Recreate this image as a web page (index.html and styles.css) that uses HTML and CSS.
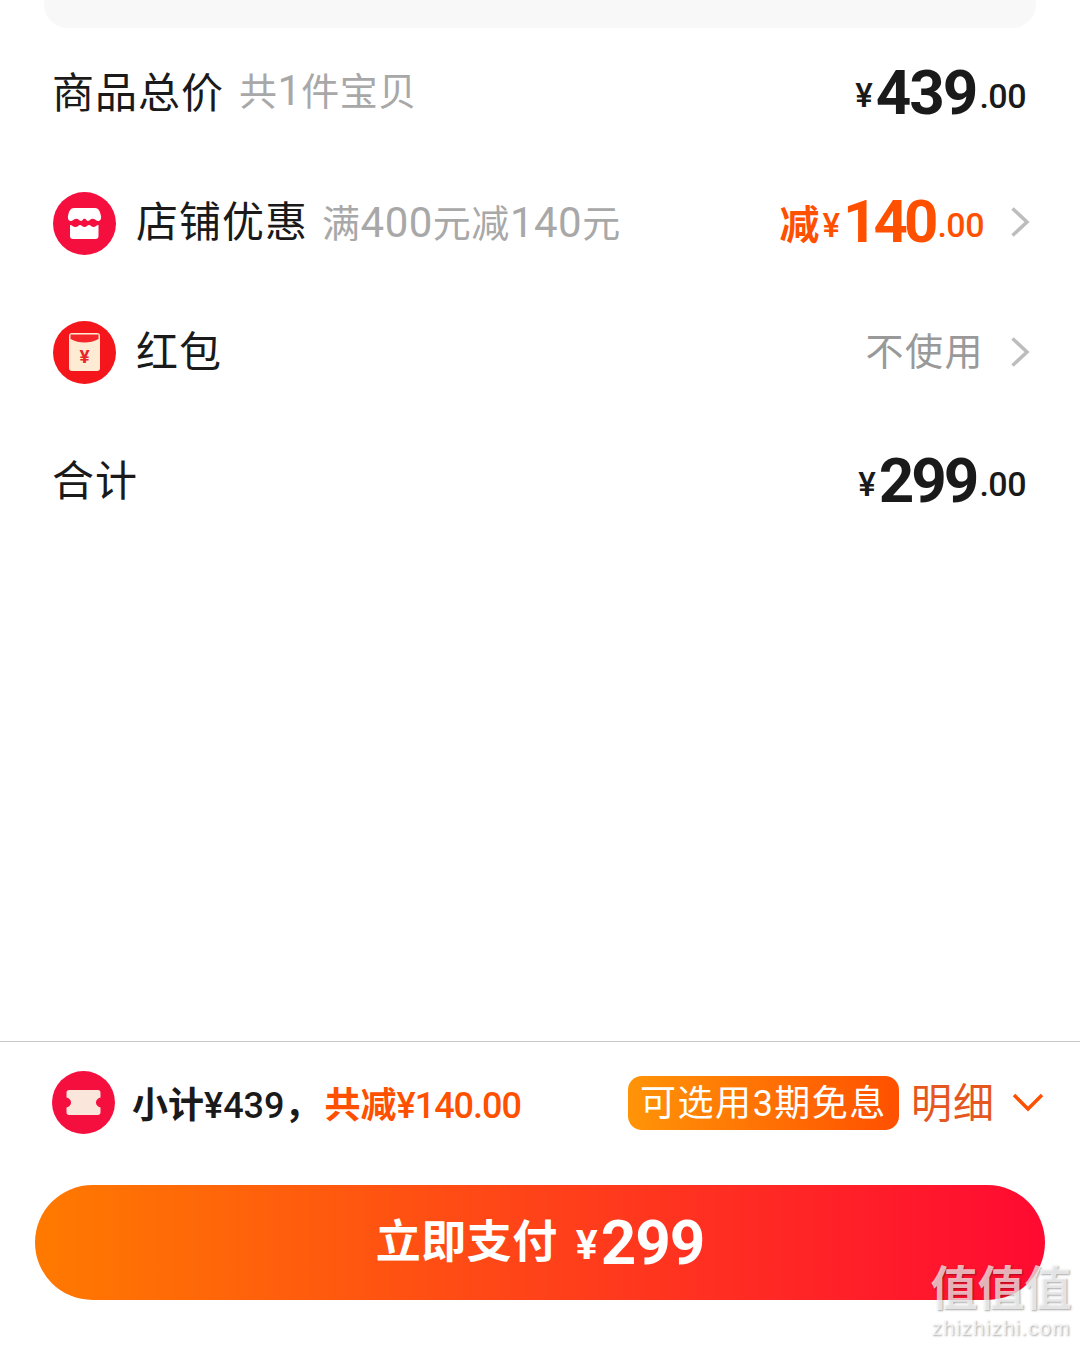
FILE: index.html
```html
<!DOCTYPE html>
<html lang="en">
<head>
    <meta charset="UTF-8">
    <meta name="viewport" content="width=device-width, initial-scale=1.0">
    <title>确认订单</title>
    <link rel="stylesheet" href="styles.css">
</head>
<body>
    <div class="page">
        <div class="top-card"></div>

        <div class="rows">
            <div class="row">
                <div class="row-left">
                    <span class="label">商品总价</span>
                    <span class="sub">共<span class="digits tight">1</span>件宝贝</span>
                </div>
                <div class="price">
                    <span class="yen">¥</span><span class="big">439</span><span class="dec">.00</span>
                </div>
            </div>

            <div class="row">
                <div class="row-left">
                    <svg class="round-icon" viewBox="0 0 63 63">
                        <circle cx="31.5" cy="31.5" r="31.5" fill="#f50f3f"/>
                        <path d="M21 16h21c3.500 0 5 3 6 8 .6 3-1 5-3 5-2.400 0-3-2.200-5.300-2.200S37 29 35 29s-1.500-2.200-3.500-2.200S30 29 28 29s-2.400-2.200-4.700-2.200S20.400 29 18 29c-2 0-3.600-2-3-5 1-5 2.500-8 6-8z" fill="#fff"/>
                        <path d="M17 33c2 0 3 2 5.500 2s3-2 4.500-2 2.500 2 4.500 2 3-2 4.500-2 2.500 2 4.500 2 3-2 5-2V44c0 2-1 3-3 3H20c-2 0-3-1-3-3z" fill="#fff"/>
                    </svg>
                    <span class="label">店铺优惠</span>
                    <span class="sub deal">满<span class="digits">400</span>元减<span class="digits">140</span>元</span>
                </div>
                <div class="row-right">
                    <div class="price orange">
                        <span class="cut">减</span><span class="yen">¥</span><span class="big narrow">140</span><span class="dec">.00</span>
                    </div>
                    <svg class="chevron" viewBox="0 0 20 32"><path d="M2.500 2.500 17 16 2.500 29.500" fill="none" stroke="#bdbdbd" stroke-width="3.500"/></svg>
                </div>
            </div>

            <div class="row">
                <div class="row-left">
                    <svg class="round-icon" viewBox="0 0 63 63">
                        <circle cx="31.5" cy="31.5" r="31.5" fill="#f5161c"/>
                        <rect x="16" y="12" width="31" height="38" rx="3" fill="#fdebd3"/>
                        <path d="M17.500 13.500h28V18c-4 2.500-9.500 3.500-14 3.500S21.500 20.500 17.500 18z" fill="#f5262a"/>
                        <text class="env-yen" x="31.500" y="42" text-anchor="middle">¥</text>
                    </svg>
                    <span class="label">红包</span>
                </div>
                <div class="row-right">
                    <span class="unused">不使用</span>
                    <svg class="chevron" viewBox="0 0 20 32"><path d="M2.500 2.500 17 16 2.500 29.500" fill="none" stroke="#bdbdbd" stroke-width="3.500"/></svg>
                </div>
            </div>

            <div class="row">
                <div class="row-left">
                    <span class="label">合计</span>
                </div>
                <div class="price">
                    <span class="yen">¥</span><span class="big mid">299</span><span class="dec">.00</span>
                </div>
            </div>
        </div>

        <div class="footer">
            <div class="summary">
                <div class="summary-left">
                    <svg class="round-icon" viewBox="0 0 63 63">
                        <circle cx="31.5" cy="31.5" r="31.5" fill="#f50f3f"/>
                        <path d="M17 19h29c1.500 0 2.500 1 2.500 2.500v5c-3 1-4.500 2.500-4.500 5s1.500 4 4.500 5v5c0 1.500-1 2.500-2.500 2.500H17c-1.500 0-2.500-1-2.500-2.500v-5c3-1 4.500-2.500 4.500-5s-1.500-4-4.500-5v-5c0-1.500 1-2.500 2.500-2.500z" fill="#fbe6dc"/>
                    </svg>
                    <span class="subtotal">小计<span class="sum-num">¥439</span>，</span>
                    <span class="saved">共减<span class="sum-num">¥140.00</span></span>
                </div>
                <div class="summary-right">
                    <span class="badge"><span class="badge-text">可选用<span class="badge-num">3</span>期免息</span></span>
                    <span class="detail">明细</span>
                    <svg class="caret" viewBox="0 0 32 20"><path d="M2 2 16 16 30 2" fill="none" stroke="#ff5000" stroke-width="3.500"/></svg>
                </div>
            </div>
            <button class="pay" type="button">
                <span class="pay-label">立即支付</span><span class="pay-yen">¥</span><span class="pay-num">299</span>
            </button>
        </div>

        <div class="watermark">
            <div class="wm-chars">值值值</div>
            <div class="wm-site">zhizhizhi.com</div>
        </div>
    </div>
</body>
</html>
```

FILE: styles.css
```css
* {
    margin: 0;
    padding: 0;
    box-sizing: border-box;
}

body {
    background: #fff;
    font-family: "Noto Sans CJK SC", "Noto Sans", sans-serif;
    color: #1a1a1a;
}

.page {
    position: relative;
    width: 1080px;
    height: 1345px;
    display: flex;
    flex-direction: column;
    overflow: hidden;
}

.top-card {
    height: 28px;
    margin: 0 44px;
    background: #f8f8f8;
    border-radius: 0 0 24px 24px;
}

.rows {
    flex: 1;
    padding: 0 54px 0 52px;
}

.row {
    height: 129.5px;
    display: flex;
    align-items: center;
    justify-content: space-between;
}

.row-left,
.row-right {
    display: flex;
    align-items: center;
}

.label {
    font-size: 42px;
    line-height: 50px;
    letter-spacing: 1px;
    margin-bottom: 6px;
}

.round-icon {
    width: 63px;
    height: 63px;
    flex: none;
    margin: 2px 20px 0 1px;
}

.sub {
    margin-left: 15px;
    margin-bottom: 6px;
    font-size: 38px;
    line-height: 50px;
    letter-spacing: 0.500px;
    color: #a8a8a8;
}

.sub.deal {
    margin-left: 14px;
    margin-bottom: 0;
}

.digits {
    font-family: "Roboto", sans-serif;
    font-size: 42px;
    letter-spacing: 0.500px;
}

.digits.tight {
    letter-spacing: 0;
}

.price {
    display: flex;
    align-items: center;
    font-family: "Roboto", sans-serif;
    font-weight: 700;
    color: #1a1a1a;
}

.price.orange {
    color: #ff5000;
}

.yen {
    font-size: 33px;
    font-weight: 500;
    margin: 6px 3px 0 0;
}

.big {
    font-size: 62px;
    letter-spacing: -2px;
    line-height: 70px;
}

.big.mid {
    letter-spacing: -3px;
}

.big.narrow {
    font-size: 60px;
    letter-spacing: -4px;
}

.dec {
    font-size: 34px;
    font-weight: 500;
    letter-spacing: -0.500px;
    margin: 6px 0 0 3px;
}

.cut {
    font-family: "Noto Sans CJK SC", sans-serif;
    font-size: 40px;
    font-weight: 700;
    line-height: 40px;
    margin: 0 3px 0 0;
}

.unused {
    font-size: 38px;
    margin-bottom: 6px;
    color: #999;
    letter-spacing: 1.500px;
}

.chevron {
    width: 20px;
    height: 32px;
    margin: 0 -4px 0 26px;
}

.env-yen {
    font-family: "Roboto", sans-serif;
    font-size: 19px;
    font-weight: 700;
    fill: #e8262a;
}

.footer {
    height: 304px;
    border-top: 1px solid #c9c9c9;
    padding: 0 35px;
}

.summary {
    height: 121px;
    padding: 0 1px 0 17px;
    display: flex;
    align-items: center;
    justify-content: space-between;
}

.summary-left,
.summary-right {
    display: flex;
    align-items: center;
}

.summary-left .round-icon {
    margin: 0 17px 0 0;
}

.subtotal,
.saved {
    font-size: 36px;
    font-weight: 700;
    line-height: 50px;
    margin-top: 2px;
}

.saved {
    color: #ff5000;
    margin-left: 4px;
}

.sum-num {
    font-family: "Roboto", sans-serif;
    font-size: 36px;
    font-weight: 500;
    letter-spacing: -1px;
}

.subtotal .sum-num {
    letter-spacing: 0;
}

.badge {
    height: 54px;
    width: 271px;
    display: flex;
    align-items: center;
    justify-content: center;
    border-radius: 14px;
    background: linear-gradient(90deg, #ff9408, #ff5000);
    color: #fff;
    font-size: 36px;
}

.badge-text {
    letter-spacing: 1.500px;
    margin-bottom: 6px;
}

.badge-num {
    font-family: "Roboto", sans-serif;
}

.detail {
    margin: 0 0 6px 12px;
    font-size: 41px;
    line-height: 50px;
    letter-spacing: 1px;
    color: #e4571f;
}

.caret {
    width: 32px;
    height: 20px;
    margin-left: 17px;
}

.pay {
    width: 100%;
    height: 115px;
    margin-top: 22px;
    display: flex;
    align-items: center;
    justify-content: center;
    border: none;
    border-radius: 58px;
    background: linear-gradient(90deg, #ff7a00, #ff0a32);
    color: #fff;
    font-family: "Noto Sans CJK SC", sans-serif;
}

.pay-label {
    font-size: 45px;
    font-weight: 700;
    line-height: 60px;
    letter-spacing: 0.500px;
    margin-bottom: 7px;
}

.pay-yen {
    margin: 4px 0 0 18px;
    font-family: "Roboto", sans-serif;
    font-size: 41px;
    font-weight: 700;
}

.pay-num {
    margin-left: 3px;
    font-family: "Roboto", sans-serif;
    font-size: 62px;
    font-weight: 700;
    letter-spacing: -1px;
}

/* site stamp sits over the pay button */
.watermark {
    position: absolute;
    right: 6px;
    bottom: 5px;
    width: 146px;
    text-align: center;
    color: rgba(255, 255, 255, 0.7);
    text-shadow: 1px 1px 2px rgba(0, 0, 0, 0.35);
}

.wm-chars {
    font-family: "Liberation Sans", "Noto Sans CJK SC", sans-serif;
    font-size: 47px;
    line-height: 54px;
    font-weight: 700;
}

.wm-site {
    font-family: "Liberation Sans", sans-serif;
    font-size: 21px;
    line-height: 24px;
    letter-spacing: 1px;
    white-space: nowrap;
}
```
